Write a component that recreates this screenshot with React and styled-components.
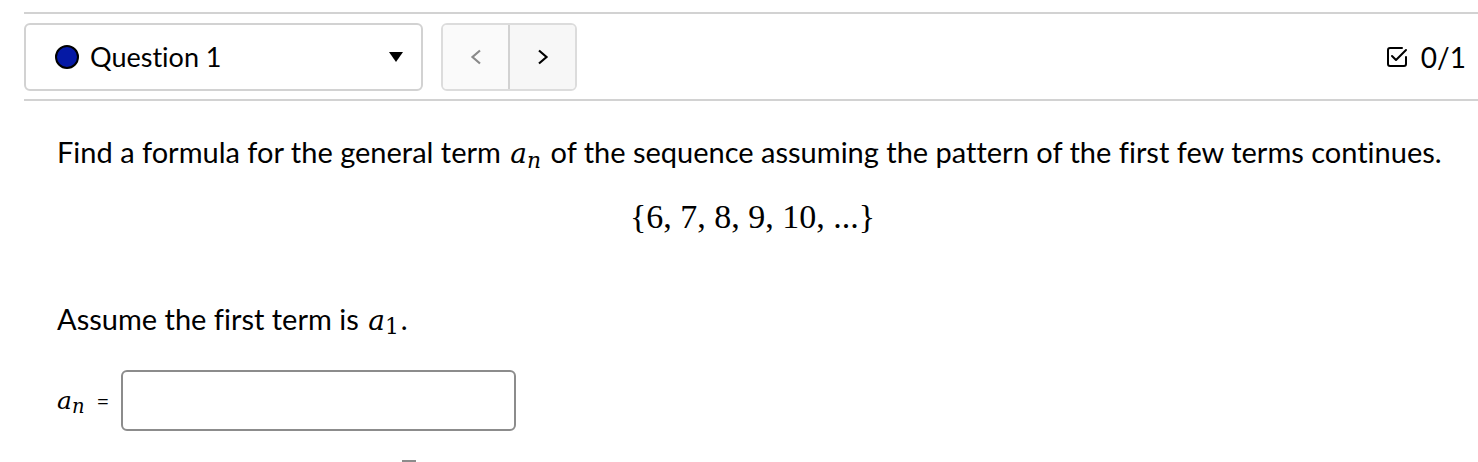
import React from 'react';
import styled, {createGlobalStyle} from 'styled-components';

const GlobalStyle = createGlobalStyle`
body {
  margin: 0;
  background: #fff;
  color: #000;
  font-family: 'Lato', 'Open Sans', sans-serif;
  font-variant-ligatures: none;
}
`;

const Header = styled.div`
margin: 12px 0 0 24px;
padding: 9px 12px 8px 0;
border-top: 2px solid #d2d2d2;
border-bottom: 2px solid #d2d2d2;
display: flex;
align-items: center;
`;

const Dropdown = styled.div`
box-sizing: border-box;
width: 399px;
height: 68px;
border: 2px solid #d2d2d2;
border-radius: 6px;
display: flex;
align-items: center;
padding: 0 18px 0 29px;
`;

const Dot = styled.span`
box-sizing: border-box;
width: 24px;
height: 24px;
border-radius: 50%;
background: #0519a5;
border: 2.5px solid #000;
margin-right: 11px;
`;

const QuestionLabel = styled.span`
font-size: 27px;
flex: 1;
margin-top: -2px;
`;

const Caret = styled.span`
width: 0;
height: 0;
border-left: 7px solid transparent;
border-right: 7px solid transparent;
border-top: 10px solid #000;
`;

const Nav = styled.div`
display: flex;
margin-left: 18px;
height: 68px;
border: 2px solid #dcdcdc;
border-radius: 6px;
overflow: hidden;
box-sizing: border-box;
`;

const NavButton = styled.div`
width: 65px;
background: ${p => (p.$disabled ? '#fafafa' : '#f7f7f7')};
display: flex;
align-items: center;
justify-content: center;
color: ${p => (p.$disabled ? '#8a8a8a' : '#000')};
& + & {
  border-left: 2px solid #d2d2d2;
}
`;

const Score = styled.div`
margin-left: auto;
display: flex;
align-items: center;
gap: 12px;
font-size: 28px;
`;

const Body = styled.div`
padding-left: 57px;
`;

const Text = styled.p`
margin: ${p => p.$top}px 0 0;
font-size: 29px;
line-height: 30px;
`;

const MathVar = styled.span`
font-family: 'DejaVu Serif', 'Liberation Serif', serif;
font-style: italic;
font-size: ${p => p.$size || 28}px;
line-height: 1;
margin: 0 2px;
`;

const Sub = styled.span`
font-size: 0.78em;
position: relative;
top: 0.22em;
`;

const SubUp = styled.span`
font-style: normal;
font-size: 0.78em;
position: relative;
top: 0.18em;
`;

const Sequence = styled.div`
margin-top: 34px;
text-align: center;
padding-right: 30px;
font-family: 'Liberation Serif', 'DejaVu Serif', serif;
font-size: 34px;
line-height: 30px;
`;

const AnswerRow = styled.div`
margin-top: 35px;
display: flex;
align-items: center;
`;

const AnswerVar = styled(MathVar)`
margin: 0;
`;

const Equals = styled.span`
font-size: 22px;
margin: 0 12px 0 12px;
`;

const AnswerInput = styled.div`
box-sizing: border-box;
width: 395px;
height: 61px;
border: 2px solid #8c8c8c;
border-radius: 6px;
`;

const Tail = styled.div`
margin: 29px 0 0 345px;
width: 14px;
height: 2px;
background: #8c8c8c;
`;

const Chevron = ({left}) => (
  <svg width="16" height="20" viewBox="0 0 16 20" fill="none" stroke="currentColor" strokeWidth="2.2" strokeLinejoin="miter">
    <path d={left ? 'M12 3.5 L4.5 10 L12 16.5' : 'M4 3.5 L11.5 10 L4 16.5'} />
  </svg>
);

const CheckBox = () => (
  <svg width="24" height="24" viewBox="0 0 24 24" fill="none" stroke="#000" strokeWidth="2" strokeLinecap="round" strokeLinejoin="round">
    <path d="M17 3 H5 a2 2 0 0 0 -2 2 V19 a2 2 0 0 0 2 2 H19 a2 2 0 0 0 2 -2 V12" />
    <path d="M7 11 L11 15 L21 5" />
  </svg>
);

const App = () => (
  <>
    <GlobalStyle />
    <Header>
      <Dropdown>
        <Dot />
        <QuestionLabel>Question 1</QuestionLabel>
        <Caret />
      </Dropdown>
      <Nav>
        <NavButton $disabled><Chevron left /></NavButton>
        <NavButton><Chevron /></NavButton>
      </Nav>
      <Score>
        <CheckBox />
        <span>0/1</span>
      </Score>
    </Header>
    <Body>
      <Text $top={36}>
        Find a formula for the general term <MathVar>a<Sub>n</Sub></MathVar> of the sequence assuming the pattern of the first few terms continues.
      </Text>
      <Sequence>{'{6, 7, 8, 9, 10, ...}'}</Sequence>
      <Text $top={72}>
        Assume the first term is <MathVar>a<SubUp>1</SubUp></MathVar>.
      </Text>
      <AnswerRow>
        <AnswerVar $size={25}>a<Sub>n</Sub></AnswerVar>
        <Equals>=</Equals>
        <AnswerInput />
      </AnswerRow>
      <Tail />
    </Body>
  </>
);

export default App;
